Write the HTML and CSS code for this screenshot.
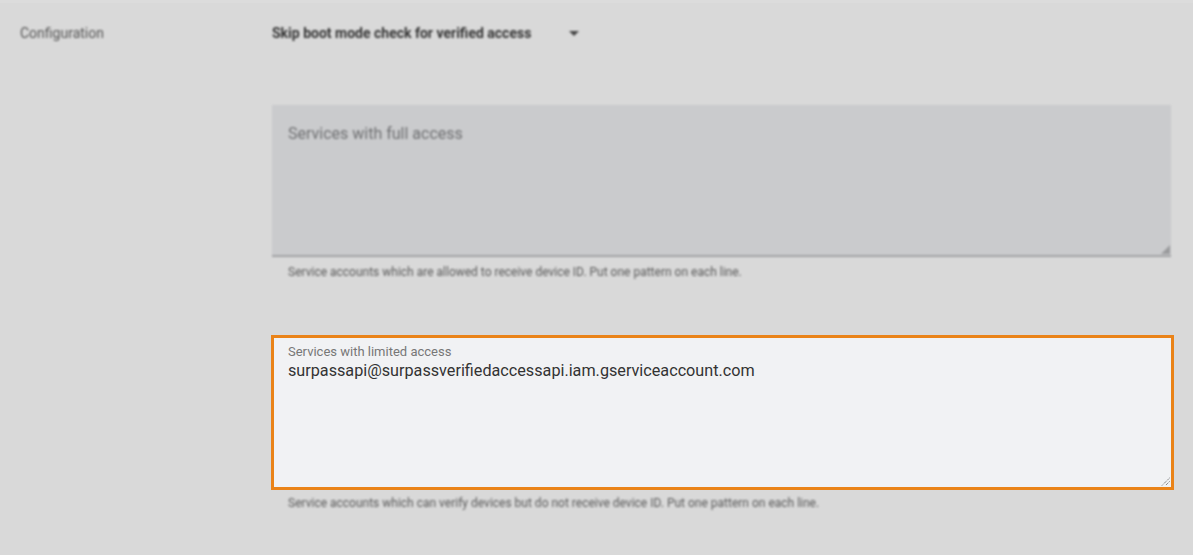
FILE: index.html
```html
<!DOCTYPE html>
<html>
<head>
<meta charset="utf-8">
<link rel="stylesheet" href="styles.css">
</head>
<body>
<div class="page">
  <div class="row">
    <div class="label blur">Configuration</div>
    <div class="content">
      <div class="select blur">
        <span class="select-text">Skip boot mode check for verified access</span>
        <span class="caret"></span>
      </div>
      <div class="field-full blur">
        <div class="ta ta-disabled">
          <span class="placeholder">Services with full access</span>
          <svg class="grip grip-dim" width="9" height="9" viewBox="0 0 9 9"><path d="M9 0 L9 9 L0 9 Z" fill="#9a9b9d"/></svg>
        </div>
        <div class="help">Service accounts which are allowed to receive device ID. Put one pattern on each line.</div>
      </div>
      <div class="field-limited">
        <div class="ta ta-active">
          <div class="ta-label">Services with limited access</div>
          <div class="ta-value">surpassapi@surpassverifiedaccessapi.iam.gserviceaccount.com</div>
          <svg class="grip" width="9" height="9" viewBox="0 0 9 9"><path d="M8.5 1 L1 8.5 M8.5 4.5 L4.5 8.5" stroke="#555" stroke-width="1" stroke-dasharray="1 1" fill="none"/></svg>
        </div>
        <div class="help help-2 blur">Service accounts which can verify devices but do not receive device ID. Put one pattern on each line.</div>
      </div>
    </div>
  </div>
</div>
</body>
</html>
```

FILE: styles.css
```css
html, body {
  margin: 0;
  padding: 0;
  background: #d9d9d9;
  font-family: Roboto, "Noto Sans", "Liberation Sans", sans-serif;
  width: 1193px;
  height: 555px;
  overflow: hidden;
}

.page {
  border-top: 3px solid #dcdcdc;
}

.blur {
  filter: blur(0.9px);
}

.row {
  display: flex;
}

.label {
  width: 252px;
  padding-left: 20px;
  padding-top: 22px;
  font-size: 14px;
  line-height: 16px;
  color: #555;
}

.content {
  flex: 1;
  padding-right: 22px;
}

.select {
  display: flex;
  align-items: center;
  padding-top: 21px;
  height: 18px;
}

.select-text {
  font-size: 14px;
  font-weight: 700;
  color: #333;
  line-height: 16px;
}

.caret {
  width: 0;
  height: 0;
  border-left: 5px solid transparent;
  border-right: 5px solid transparent;
  border-top: 5px solid #444;
  margin-left: 38px;
  margin-top: 1px;
}

.field-full {
  margin-top: 63px;
}

.ta {
  position: relative;
  box-sizing: border-box;
}

.ta-disabled {
  height: 152px;
  background: #cacbcd;
  border-bottom: 2px solid #a2a3a5;
  padding: 19px 16px 0;
}

.placeholder {
  font-size: 16px;
  color: #6e6f71;
  line-height: 20px;
}

.grip {
  position: absolute;
  right: 1px;
  bottom: 1px;
}

.help {
  font-size: 12px;
  color: #5a5a5a;
  line-height: 14px;
  padding-left: 16px;
  margin-top: 8px;
}

.field-limited {
  margin-top: 56px;
}

.ta-active {
  margin-left: -1px;
  margin-right: -3px;
  height: 155px;
  border: 3px solid #ea8318;
  background: #f1f2f4;
  padding: 6px 14px 0;
}

.ta-label {
  font-size: 13px;
  color: #777;
  line-height: 16px;
}

.ta-value {
  font-size: 16.2px;
  color: #333;
  line-height: 20px;
  margin-top: 1px;
}

.help-2 {
  margin-top: 6px;
}
```
